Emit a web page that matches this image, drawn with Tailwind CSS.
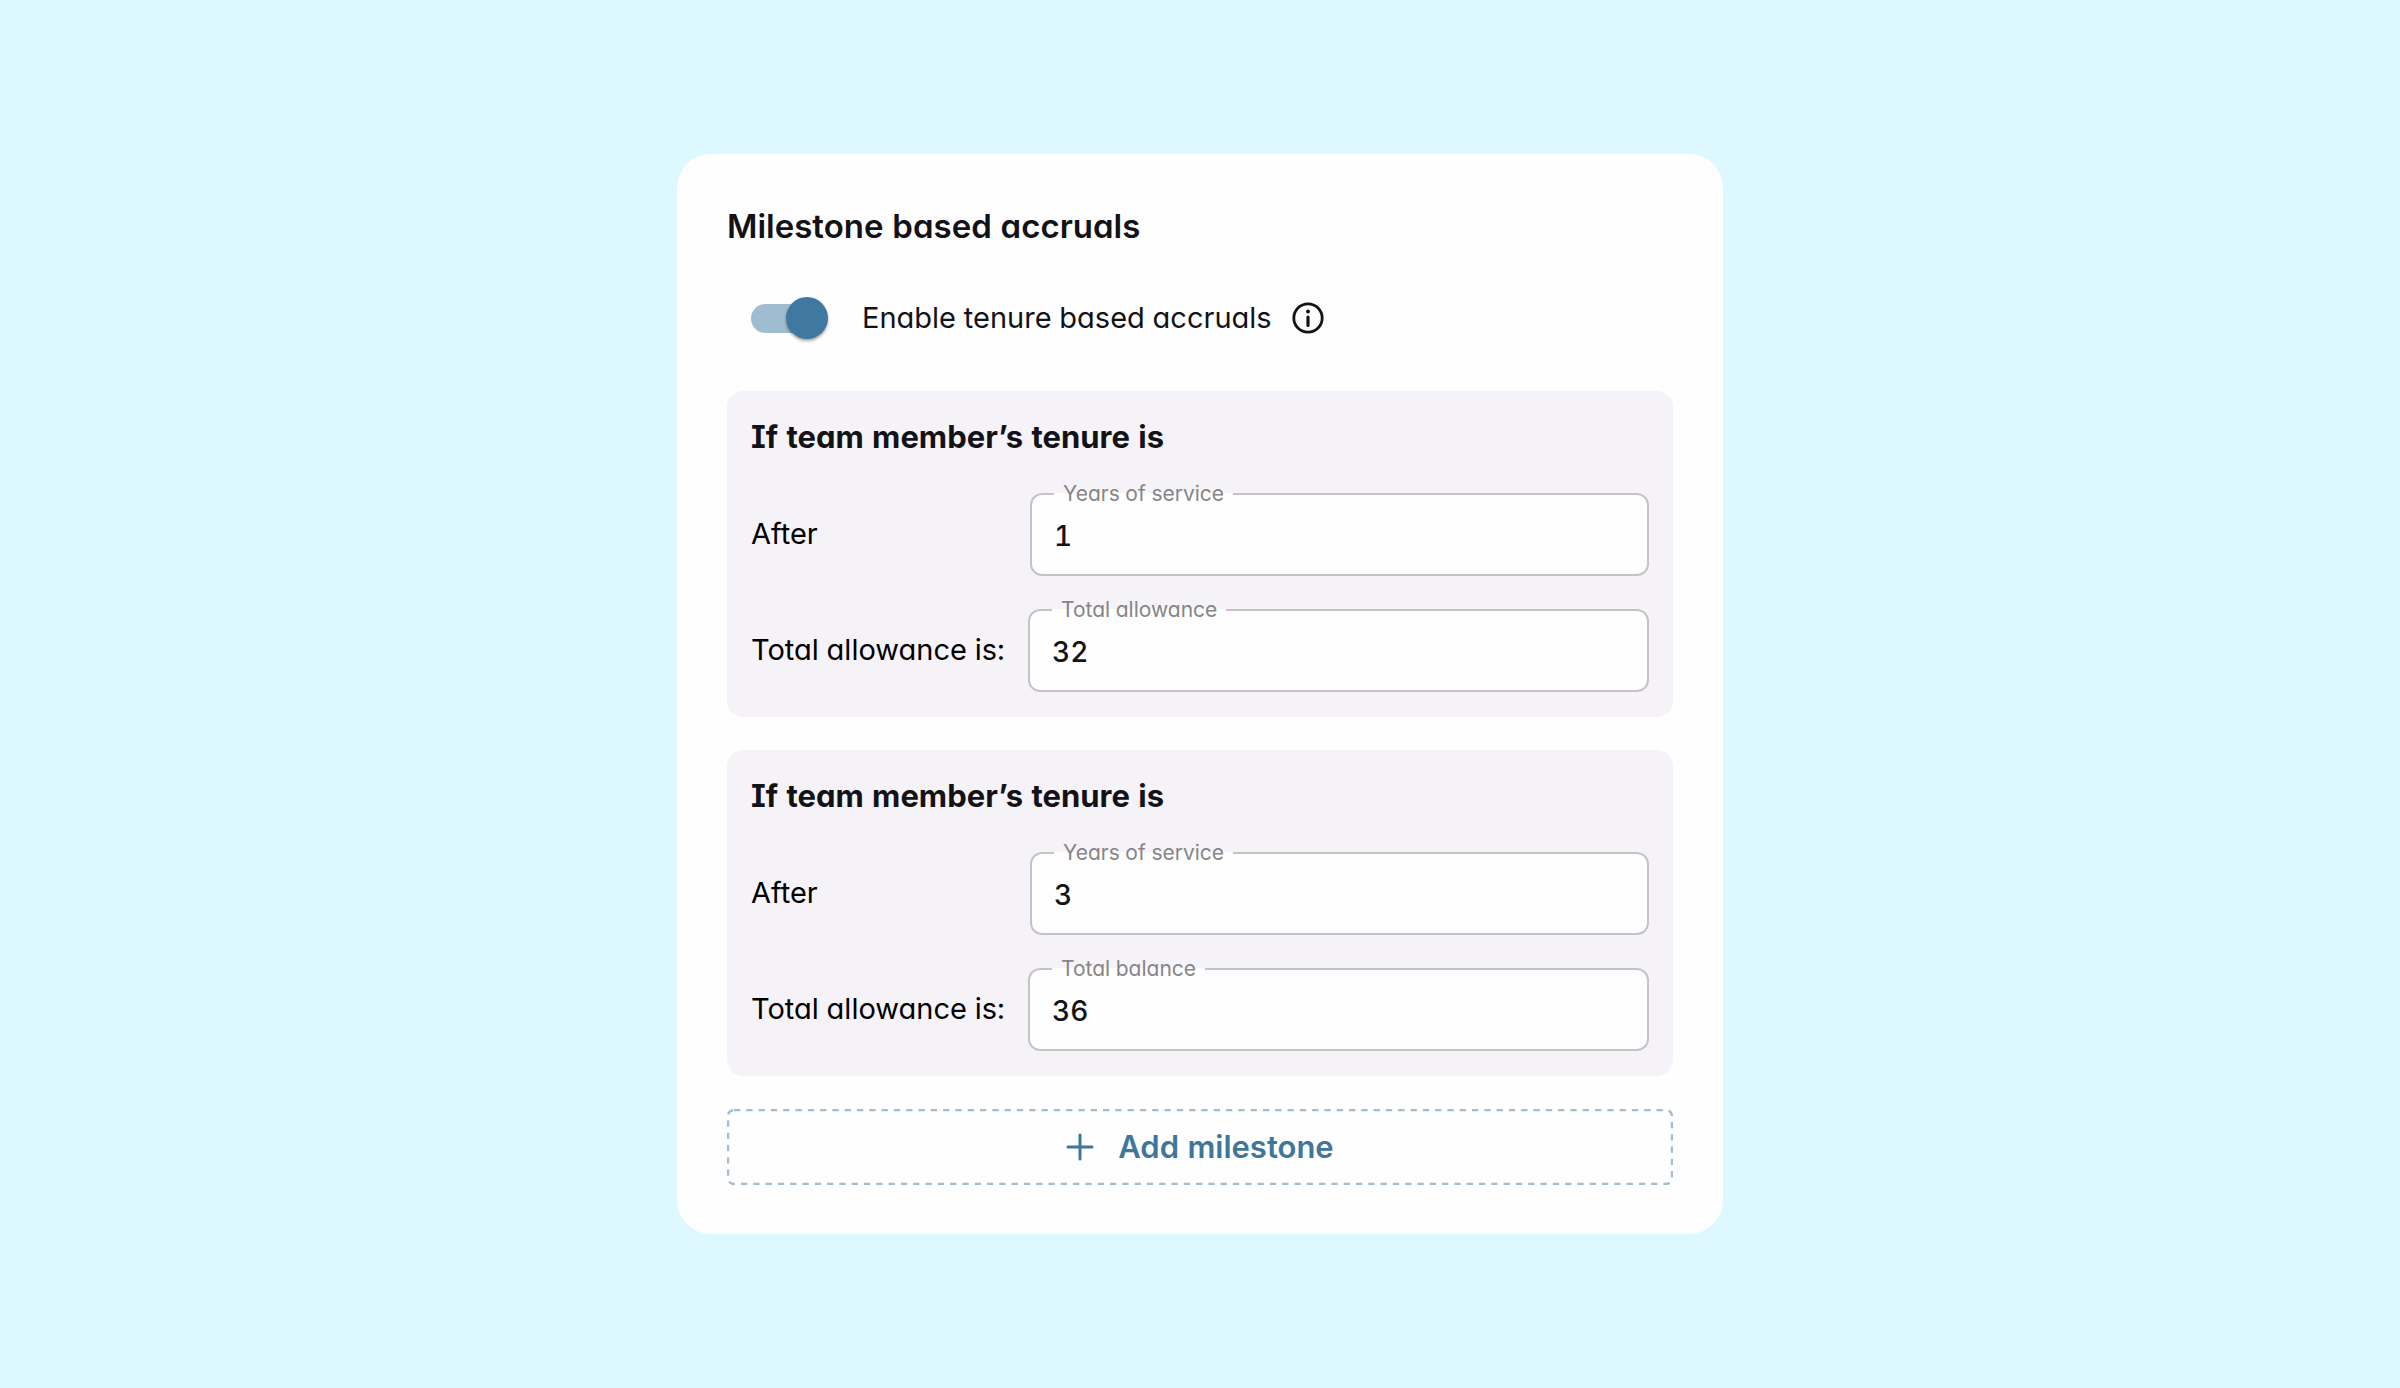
<!DOCTYPE html>
<html lang="en">
<head>
    <meta charset="UTF-8">
    <meta name="viewport" content="width=device-width, initial-scale=1.0">
    <title>Milestone based accruals</title>
    <script src="https://cdn.jsdelivr.net/npm/@tailwindcss/browser@4"></script>
    <style>
        body {
            font-family: 'Inter', sans-serif;
            /* single-storey a, serifed I, tabular figures */
            font-feature-settings: 'cv11', 'cv08', 'tnum';
        }
    </style>
</head>
<body class="bg-[#def8ff] text-[#131216] min-h-screen flex items-center justify-center">
    <main class="bg-[#fefefe] w-full max-w-[1046px] rounded-[34px] px-[50px] pt-[50px] pb-[49px]">
        <h1 class="text-[33px] leading-[44px] font-semibold">Milestone based accruals</h1>

        <!-- Toggle -->
        <div class="mt-12 ml-6 flex items-center h-11">
            <input type="checkbox" id="tenure" checked class="appearance-none relative w-[77px] h-[42px] shrink-0 cursor-pointer before:absolute before:left-0 before:top-[7px] before:w-[70px] before:h-[29px] before:rounded-full before:bg-gray-300 checked:before:bg-[#a0bcd0] after:absolute after:top-0 after:left-0 after:size-[42px] after:rounded-full after:bg-gray-100 after:shadow-[0_2px_3px_rgba(0,0,0,0.35)] checked:after:left-[35px] checked:after:bg-[#4178a2]">
            <label for="tenure" class="ml-[34px] text-[29px] leading-[42px]">Enable tenure based accruals</label>
            <button type="button" aria-label="More information" class="ml-5">
                <svg class="size-8" viewBox="0 0 32 32" fill="none">
                    <circle cx="16" cy="16" r="14.2" stroke="#131216" stroke-width="2.8"/>
                    <circle cx="16" cy="9.6" r="2" fill="#131216"/>
                    <path d="M16 15v8.4" stroke="#131216" stroke-width="3.2" stroke-linecap="round"/>
                </svg>
            </button>
        </div>

        <!-- Milestone 1 -->
        <section class="mt-[51px] bg-[#f5f3f7] rounded-2xl px-6 py-[25px]">
            <h2 class="text-[31px] leading-[42px] font-bold">If team member’s tenure is</h2>
            <div class="mt-[26px] flex items-center">
                <span class="w-[279px] shrink-0 pt-2 text-[29px] leading-[42px] text-black">After</span>
                <fieldset class="flex-1 min-w-0 bg-[#fefefe] border-2 border-[#c5c3c7] rounded-xl pb-1.5">
                    <legend class="ml-[22px] px-[9px] text-[21px] leading-5 text-[#868587]"><label for="years-1">Years of service</label></legend>
                    <input type="text" id="years-1" value="1" class="block w-full h-16 px-[22px] text-[28px] font-medium outline-none">
                </fieldset>
            </div>
            <div class="mt-6 flex items-center">
                <span class="w-[277px] shrink-0 pt-2 text-[29px] leading-[42px] text-black">Total allowance is:</span>
                <fieldset class="flex-1 min-w-0 bg-[#fefefe] border-2 border-[#c5c3c7] rounded-xl pb-1.5">
                    <legend class="ml-[22px] px-[9px] text-[21px] leading-5 text-[#868587]"><label for="total-1">Total allowance</label></legend>
                    <input type="text" id="total-1" value="32" class="block w-full h-16 px-[22px] text-[28px] font-medium outline-none">
                </fieldset>
            </div>
        </section>

        <!-- Milestone 2 -->
        <section class="mt-[33px] bg-[#f5f3f7] rounded-2xl px-6 py-[25px]">
            <h2 class="text-[31px] leading-[42px] font-bold">If team member’s tenure is</h2>
            <div class="mt-[26px] flex items-center">
                <span class="w-[279px] shrink-0 pt-2 text-[29px] leading-[42px] text-black">After</span>
                <fieldset class="flex-1 min-w-0 bg-[#fefefe] border-2 border-[#c5c3c7] rounded-xl pb-1.5">
                    <legend class="ml-[22px] px-[9px] text-[21px] leading-5 text-[#868587]"><label for="years-2">Years of service</label></legend>
                    <input type="text" id="years-2" value="3" class="block w-full h-16 px-[22px] text-[28px] font-medium outline-none">
                </fieldset>
            </div>
            <div class="mt-6 flex items-center">
                <span class="w-[277px] shrink-0 pt-2 text-[29px] leading-[42px] text-black">Total allowance is:</span>
                <fieldset class="flex-1 min-w-0 bg-[#fefefe] border-2 border-[#c5c3c7] rounded-xl pb-1.5">
                    <legend class="ml-[22px] px-[9px] text-[21px] leading-5 text-[#868587]"><label for="total-2">Total balance</label></legend>
                    <input type="text" id="total-2" value="36" class="block w-full h-16 px-[22px] text-[28px] font-medium outline-none">
                </fieldset>
            </div>
        </section>

        <button type="button" class="relative mt-[33px] w-full h-[76px] flex items-center justify-center gap-6 text-[31px] font-semibold text-[#3f779b] cursor-pointer">
            <!-- Dashed outline -->
            <svg class="absolute inset-0 size-full" fill="none">
                <rect x="1" y="1" rx="6" class="w-[calc(100%-2px)] h-[calc(100%-2px)]" stroke="#a0becf" stroke-width="2.4" stroke-dasharray="6.3 6"/>
            </svg>
            <svg class="size-7" viewBox="0 0 28 28" fill="none" stroke="currentColor" stroke-width="3" stroke-linecap="round">
                <path d="M14 2v24M2 14h24"/>
            </svg>
            Add milestone
        </button>
    </main>
</body>
</html>
